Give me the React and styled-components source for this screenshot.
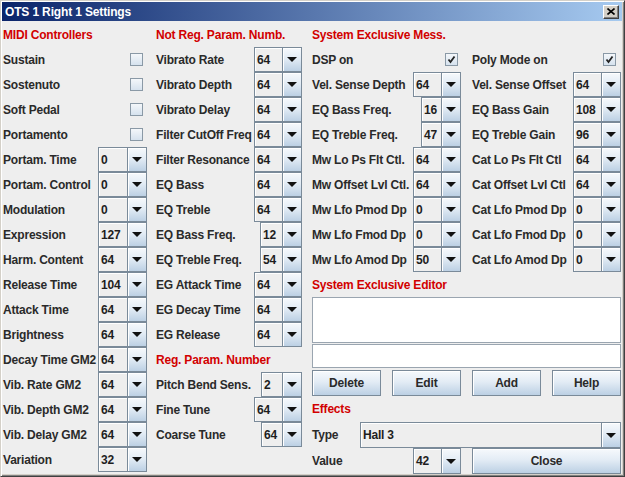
import React from "react";
import styled, { createGlobalStyle } from "styled-components";

const GlobalStyle = createGlobalStyle`
  html, body {
    margin: 0;
    padding: 0;
    background: #d4d0c8;
  }
  body {
    font-family: "Liberation Sans", Arial, sans-serif;
  }
`;

const Window = styled.div`
  width: 625px;
  height: 477px;
  box-sizing: border-box;
  background: #d4d0c8;
  border-top: 1px solid #d4d0c8;
  border-left: 1px solid #d4d0c8;
  border-right: 1px solid #404040;
  border-bottom: 1px solid #404040;
  box-shadow: inset 1px 1px 0 #ffffff, inset -1px -1px 0 #808080;
  padding: 1px 2px 2px 1px;
  display: flex;
  flex-direction: column;
`;

const TitleBar = styled.div`
  height: 19px;
  flex: none;
  display: flex;
  align-items: center;
  justify-content: space-between;
  padding: 0 3px 0 3px;
  background: linear-gradient(to right, #0a246a, #a6caf0);
  color: #ffffff;
  font-weight: bold;
  font-size: 12px;
  letter-spacing: -0.15px;
`;

const CloseBox = styled.div`
  width: 16px;
  height: 14px;
  box-sizing: border-box;
  background: #d4d0c8;
  border-top: 1px solid #ffffff;
  border-left: 1px solid #ffffff;
  border-right: 1px solid #404040;
  border-bottom: 1px solid #404040;
  box-shadow: inset -1px -1px 0 #808080;
  display: flex;
  align-items: center;
  justify-content: center;
`;

const Body = styled.div`
  flex: 1;
  background: #eeeeee;
  display: flex;
  padding: 1px 0 0 1px;
  color: #2a2a2a;
  font-size: 12px;
  letter-spacing: -0.2px;
  font-weight: bold;
`;

const Column = styled.div`
  width: ${(p) => p.$width}px;
  margin-left: ${(p) => p.$gap || 0}px;
  display: flex;
  flex-direction: column;
`;

const Header = styled.div`
  height: ${(p) => p.$h || 25}px;
  display: flex;
  align-items: center;
  color: #d20000;
`;

const Row = styled.div`
  height: ${(p) => p.$h || 25}px;
  display: flex;
  align-items: center;
  justify-content: space-between;
  white-space: nowrap;
`;

const Label = styled.span`
  padding-left: 0;
`;

const ComboBox = styled.div`
  width: ${(p) => p.$width}px;
  height: ${(p) => p.$h || 25}px;
  box-sizing: border-box;
  display: flex;
  border: 1px solid #7a8a99;
  background: #eeeeee;
  flex: none;
`;

const ComboValue = styled.div`
  flex: 1;
  display: flex;
  align-items: center;
  padding-left: 2px;
  color: #1e1e1e;
  box-shadow: inset 1px 1px 0 #ffffff;
  overflow: hidden;
`;

const ComboArrow = styled.div`
  width: 18px;
  flex: none;
  border-left: 1px solid #7a8a99;
  background: linear-gradient(#f6f9fc 0%, #e3ecf5 45%, #bcd0e4 100%);
  box-shadow: inset 1px 1px 0 #ffffff;
  display: flex;
  align-items: center;
  justify-content: center;
`;

const CheckBox = styled.div`
  width: 13px;
  height: 13px;
  box-sizing: border-box;
  margin-right: ${(p) => p.$mr}px;
  border: 1px solid #8a99a6;
  background: linear-gradient(#f4f7fa, #d6e2ee);
  display: flex;
  align-items: center;
  justify-content: center;
`;

const RightGrid = styled.div`
  display: grid;
  grid-template-columns: 149px 149px;
  column-gap: 11px;
`;

const TextArea = styled.div`
  height: 46px;
  box-sizing: border-box;
  background: #ffffff;
  border: 1px solid #9aa5b0;
`;

const TextField = styled.div`
  height: 24px;
  margin-top: 1px;
  box-sizing: border-box;
  background: #ffffff;
  border: 1px solid #9aa5b0;
`;

const ButtonRow = styled.div`
  margin-top: 2px;
  display: grid;
  grid-template-columns: repeat(4, 69px);
  column-gap: 11px;
`;

const Button = styled.div`
  height: ${(p) => p.$h || 26}px;
  box-sizing: border-box;
  border: 1px solid #7a8a99;
  background: linear-gradient(#f6f9fc 0%, #e3ecf5 45%, #bcd0e4 100%);
  box-shadow: inset 1px 1px 0 #ffffff;
  display: flex;
  align-items: center;
  justify-content: center;
  color: #2a2a2a;
`;

const Arrow = () => (
  <svg width="10" height="5" viewBox="0 0 10 5">
    <path d="M0 0 H10 L5 5 Z" fill="#111" />
  </svg>
);

const Combo = ({ value, width, h }) => (
  <ComboBox $width={width} $h={h}>
    <ComboValue>{value}</ComboValue>
    <ComboArrow>
      <Arrow />
    </ComboArrow>
  </ComboBox>
);

const Check = ({ checked, mr }) => (
  <CheckBox $mr={mr}>
    {checked && (
      <svg width="9" height="9" viewBox="0 0 9 9">
        <path d="M1.5 4.5 L3.5 7 L7.5 1.5" stroke="#222" strokeWidth="1.8" fill="none" />
      </svg>
    )}
  </CheckBox>
);

const col1 = [
  ["Sustain", "cb"],
  ["Sostenuto", "cb"],
  ["Soft Pedal", "cb"],
  ["Portamento", "cb"],
  ["Portam. Time", "0"],
  ["Portam. Control", "0"],
  ["Modulation", "0"],
  ["Expression", "127"],
  ["Harm. Content", "64"],
  ["Release Time", "104"],
  ["Attack Time", "64"],
  ["Brightness", "64"],
  ["Decay Time GM2", "64"],
  ["Vib. Rate GM2", "64"],
  ["Vib. Depth GM2", "64"],
  ["Vib. Delay GM2", "64"],
  ["Variation", "32"],
];

const col2 = [
  ["Vibrato Rate", "64", 48],
  ["Vibrato Depth", "64", 48],
  ["Vibrato Delay", "64", 48],
  ["Filter CutOff Freq", "64", 48],
  ["Filter Resonance", "64", 48],
  ["EQ Bass", "64", 48],
  ["EQ Treble", "64", 48],
  ["EQ Bass Freq.", "12", 42],
  ["EQ Treble Freq.", "54", 42],
  ["EG Attack Time", "64", 48],
  ["EG Decay Time", "64", 48],
  ["EG Release", "64", 48],
];

const col2b = [
  ["Pitch Bend Sens.", "2", 41],
  ["Fine Tune", "64", 48],
  ["Coarse Tune", "64", 41],
];

const sysex = [
  [["DSP on", "cb", 0, 3], ["Poly Mode on", "cb", 0, 5]],
  [["Vel. Sense Depth", "64", 48], ["Vel. Sense Offset", "64", 48]],
  [["EQ Bass Freq.", "16", 40], ["EQ Bass Gain", "108", 48]],
  [["EQ Treble Freq.", "47", 40], ["EQ Treble Gain", "96", 48]],
  [["Mw Lo Ps Flt Ctl.", "64", 48], ["Cat Lo Ps Flt Ctl", "64", 48]],
  [["Mw Offset Lvl Ctl.", "64", 48], ["Cat Offset Lvl Ctl", "64", 48]],
  [["Mw Lfo Pmod Dp", "0", 48], ["Cat Lfo Pmod Dp", "0", 48]],
  [["Mw Lfo Fmod Dp", "0", 48], ["Cat Lfo Fmod Dp", "0", 48]],
  [["Mw Lfo Amod Dp", "50", 48], ["Cat Lfo Amod Dp", "0", 48]],
];

const Field = ({ label, value, width, mr = 4, checked = true, h }) => (
  <Row $h={h}>
    <Label>{label}</Label>
    {value === "cb" ? (
      <Check checked={checked} mr={mr} />
    ) : (
      <Combo value={value} width={width} h={h} />
    )}
  </Row>
);

export default function App() {
  return (
    <>
      <GlobalStyle />
      <Window>
        <TitleBar>
          <span>OTS 1 Right 1 Settings</span>
          <CloseBox>
            <svg width="8" height="7" viewBox="0 0 8 7">
              <path d="M0.5 0.5 L7.5 6.5 M7.5 0.5 L0.5 6.5" stroke="#000" strokeWidth="1.6" />
            </svg>
          </CloseBox>
        </TitleBar>
        <Body>
          <Column $width={144}>
            <Header>MIDI Controllers</Header>
            {col1.map(([l, v]) => (
              <Field key={l} label={l} value={v} width={49} mr={4} checked={false} />
            ))}
          </Column>
          <Column $width={146} $gap={9}>
            <Header>Not Reg. Param. Numb.</Header>
            {col2.map(([l, v, w]) => (
              <Field key={l} label={l} value={v} width={w} />
            ))}
            <Header>Reg. Param. Number</Header>
            {col2b.map(([l, v, w]) => (
              <Field key={l} label={l} value={v} width={w} />
            ))}
          </Column>
          <Column $width={309} $gap={10}>
            <Header>System Exclusive Mess.</Header>
            <RightGrid>
              {sysex.flat().map(([l, v, w, mr]) => (
                <Field key={l + v} label={l} value={v} width={w} mr={mr} />
              ))}
            </RightGrid>
            <Header>System Exclusive Editor</Header>
            <TextArea />
            <TextField />
            <ButtonRow>
              <Button>Delete</Button>
              <Button>Edit</Button>
              <Button>Add</Button>
              <Button>Help</Button>
            </ButtonRow>
            <Header $h={26}>Effects</Header>
            <Row $h={26}>
              <Label>Type</Label>
              <Combo value="Hall 3" width={261} h={26} />
            </Row>
            <RightGrid>
              <Field label="Value" value="42" width={48} h={26} />
              <Button>Close</Button>
            </RightGrid>
          </Column>
        </Body>
      </Window>
    </>
  );
}
